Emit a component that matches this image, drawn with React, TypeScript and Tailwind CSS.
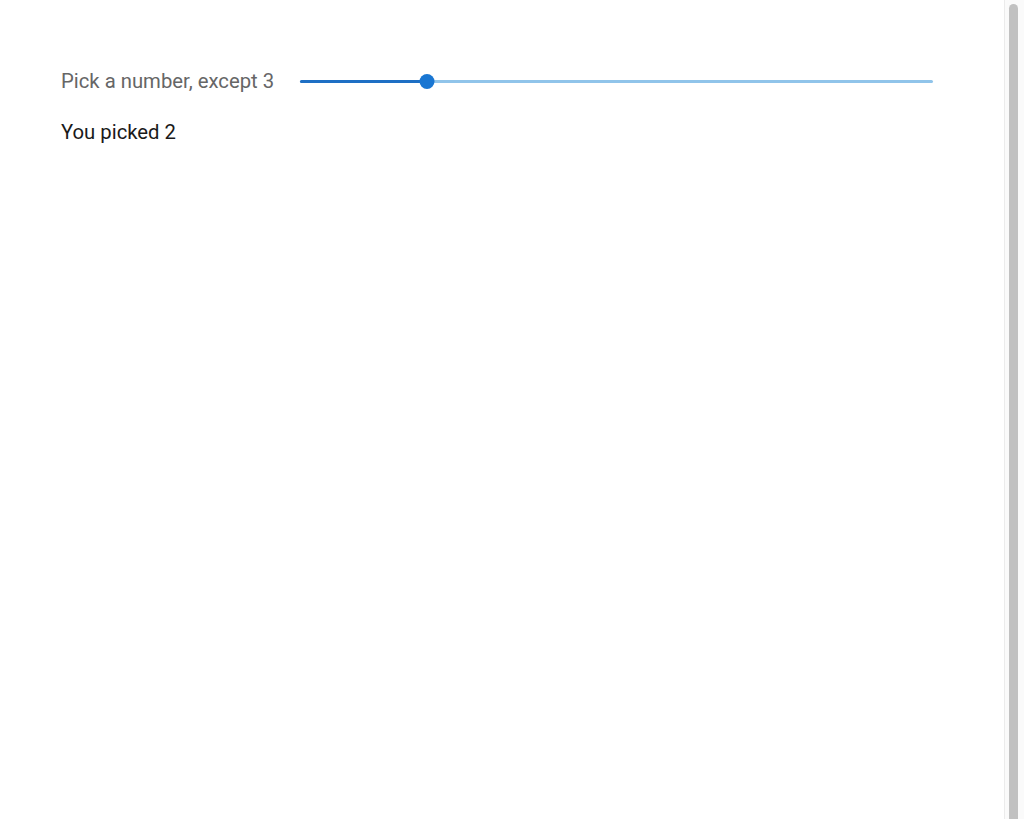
import React from "react";

export default function App() {
  const value = 2;
  const min = 0;
  const max = 10;
  const pct = ((value - min) / (max - min)) * 100;
  return (
    <div className="flex h-[819px] overflow-hidden bg-white">
      <div
        className="flex-1 pl-[61px] pt-[66px] text-[20.3px]"
        style={{ fontFamily: "Roboto, 'Noto Sans', sans-serif" }}
      >
        <div className="flex items-center h-[30px]">
          <span className="w-[239px] shrink-0 text-[#666666] leading-[30px] whitespace-nowrap">
            Pick a number, except 3
          </span>
          <div className="relative w-[633px] h-[30px] flex items-center">
            <div className="h-[3px] w-full bg-[#90c4ea] rounded-full" />
            <div
              className="absolute left-0 h-[3px] bg-[#1e6fc4] rounded-full"
              style={{ width: `${pct}%` }}
            />
            <div
              className="absolute w-[15px] h-[15px] rounded-full bg-[#1976d2] -translate-x-1/2"
              style={{ left: `${pct}%` }}
            />
          </div>
        </div>
        <div className="mt-[21px] text-[#1a1a1a] leading-[30px]">You picked {value}</div>
      </div>
      <div className="w-[20px] shrink-0 border-l border-[#ebebeb] bg-[#fafafa] pt-[4px] pl-[4px]">
        <div className="w-[9px] h-[830px] rounded-full bg-[#c1c1c1]" />
      </div>
    </div>
  );
}
